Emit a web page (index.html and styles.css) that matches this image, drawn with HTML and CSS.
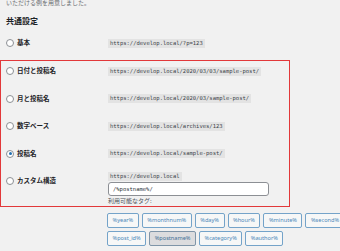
FILE: index.html
```html
<!DOCTYPE html>
<html lang="ja">
<head>
  <meta charset="UTF-8" />
  <title>パーマリンク設定</title>
  <link rel="stylesheet" href="styles.css">
</head>
<body>

<p class="intro">いただける例を用意しました。</p>

<h2>共通設定</h2>

<div class="row">
  <label class="label"><span class="radio"></span>基本</label>
  <code>https://develop.local/?p=123</code>
</div>

<div class="box">
  <div class="row">
    <label class="label"><span class="radio"></span>日付と投稿名</label>
    <code>https://develop.local/2020/03/03/sample-post/</code>
  </div>
  <div class="row">
    <label class="label"><span class="radio"></span>月と投稿名</label>
    <code>https://develop.local/2020/03/sample-post/</code>
  </div>
  <div class="row">
    <label class="label"><span class="radio"></span>数字ベース</label>
    <code>https://develop.local/archives/123</code>
  </div>
  <div class="row">
    <label class="label"><span class="radio checked"></span>投稿名</label>
    <code>https://develop.local/sample-post/</code>
  </div>
  <div class="row custom">
    <label class="label"><span class="radio"></span>カスタム構造</label>
    <div class="custom-field">
      <code>https://develop.local</code>
      <div class="input">/%postname%/</div>
      <div class="hint">利用可能なタグ:</div>
    </div>
  </div>
</div>

<div class="tags">
  <div class="tag-row">
    <span class="tag">%year%</span>
    <span class="tag">%monthnum%</span>
    <span class="tag">%day%</span>
    <span class="tag">%hour%</span>
    <span class="tag">%minute%</span>
    <span class="tag">%second%</span>
  </div>
  <div class="tag-row">
    <span class="tag">%post_id%</span>
    <span class="tag active">%postname%</span>
    <span class="tag">%category%</span>
    <span class="tag">%author%</span>
  </div>
</div>

</body>
</html>
```

FILE: styles.css
```css
body {
  font-family: "Noto Sans", "Noto Sans CJK JP", sans-serif;
  margin: 0;
  padding: 0;
  background-color: #f1f1f1;
  color: #1d2327;
  width: 340px;
  height: 251px;
  overflow: hidden;
}

.intro {
  margin: -2px 0 0 6px;
  font-size: 6px;
  line-height: 10px;
  color: #6a6d70;
}

h2 {
  margin: 7px 0 0 6px;
  font-size: 8px;
  line-height: 12px;
  font-weight: bold;
}

.row {
  display: flex;
  align-items: center;
  height: 20px;
  padding-left: 6px;
}

h2 + .row {
  margin-top: 6px;
}

.label {
  display: flex;
  align-items: center;
  width: 102px;
  flex-shrink: 0;
  font-size: 6.5px;
  font-weight: bold;
  line-height: 10px;
}

.radio {
  width: 8px;
  height: 8px;
  box-sizing: border-box;
  border: 1px solid #8c8f94;
  border-radius: 50%;
  background: #fff;
  margin-right: 3px;
  position: relative;
}

.radio.checked::after {
  content: "";
  position: absolute;
  left: 1.5px;
  top: 1.5px;
  width: 3px;
  height: 3px;
  border-radius: 50%;
  background: #2271b1;
}

code {
  font-family: "DejaVu Sans Mono", "Liberation Mono", monospace;
  font-size: 5.5px;
  line-height: 9px;
  padding: 0 2px;
  background: #e3e3e3;
  color: #3c434a;
}

.box {
  margin-top: 7px;
  width: 290px;
  box-sizing: border-box;
  border: 1px solid #e2383a;
  display: flex;
  flex-direction: column;
  gap: 7.6px;
}

.box .row {
  padding-left: 5px;
}

.row.custom {
  height: auto;
  align-items: flex-start;
  margin-top: 1px;
}

.row.custom .label {
  padding-top: 4px;
}

.custom-field {
  display: flex;
  flex-direction: column;
  align-items: flex-start;
}

.input {
  margin-top: 1px;
  width: 161px;
  height: 14px;
  box-sizing: border-box;
  border: 1px solid #8c8f94;
  border-radius: 3px;
  background: #fff;
  padding-left: 4px;
  font-family: "DejaVu Sans Mono", "Liberation Mono", monospace;
  font-size: 5.5px;
  line-height: 12px;
  color: #2c3338;
}

.hint {
  margin-top: 1px;
  font-size: 6px;
  line-height: 9px;
  color: #50575e;
}

.tags {
  margin: 6px 0 0 107px;
  display: flex;
  flex-direction: column;
  gap: 3px;
}

.tag-row {
  display: flex;
  gap: 3px;
}

.tag {
  height: 15px;
  box-sizing: border-box;
  padding: 0 4.5px;
  border: 1px solid #74a3c9;
  border-radius: 2px;
  background: #f6f7f7;
  color: #4b87b9;
  font-size: 5.6px;
  line-height: 13px;
}

.tag.active {
  background: #dcdcde;
  border-color: #7f95a8;
  color: #3f6f96;
}
```
